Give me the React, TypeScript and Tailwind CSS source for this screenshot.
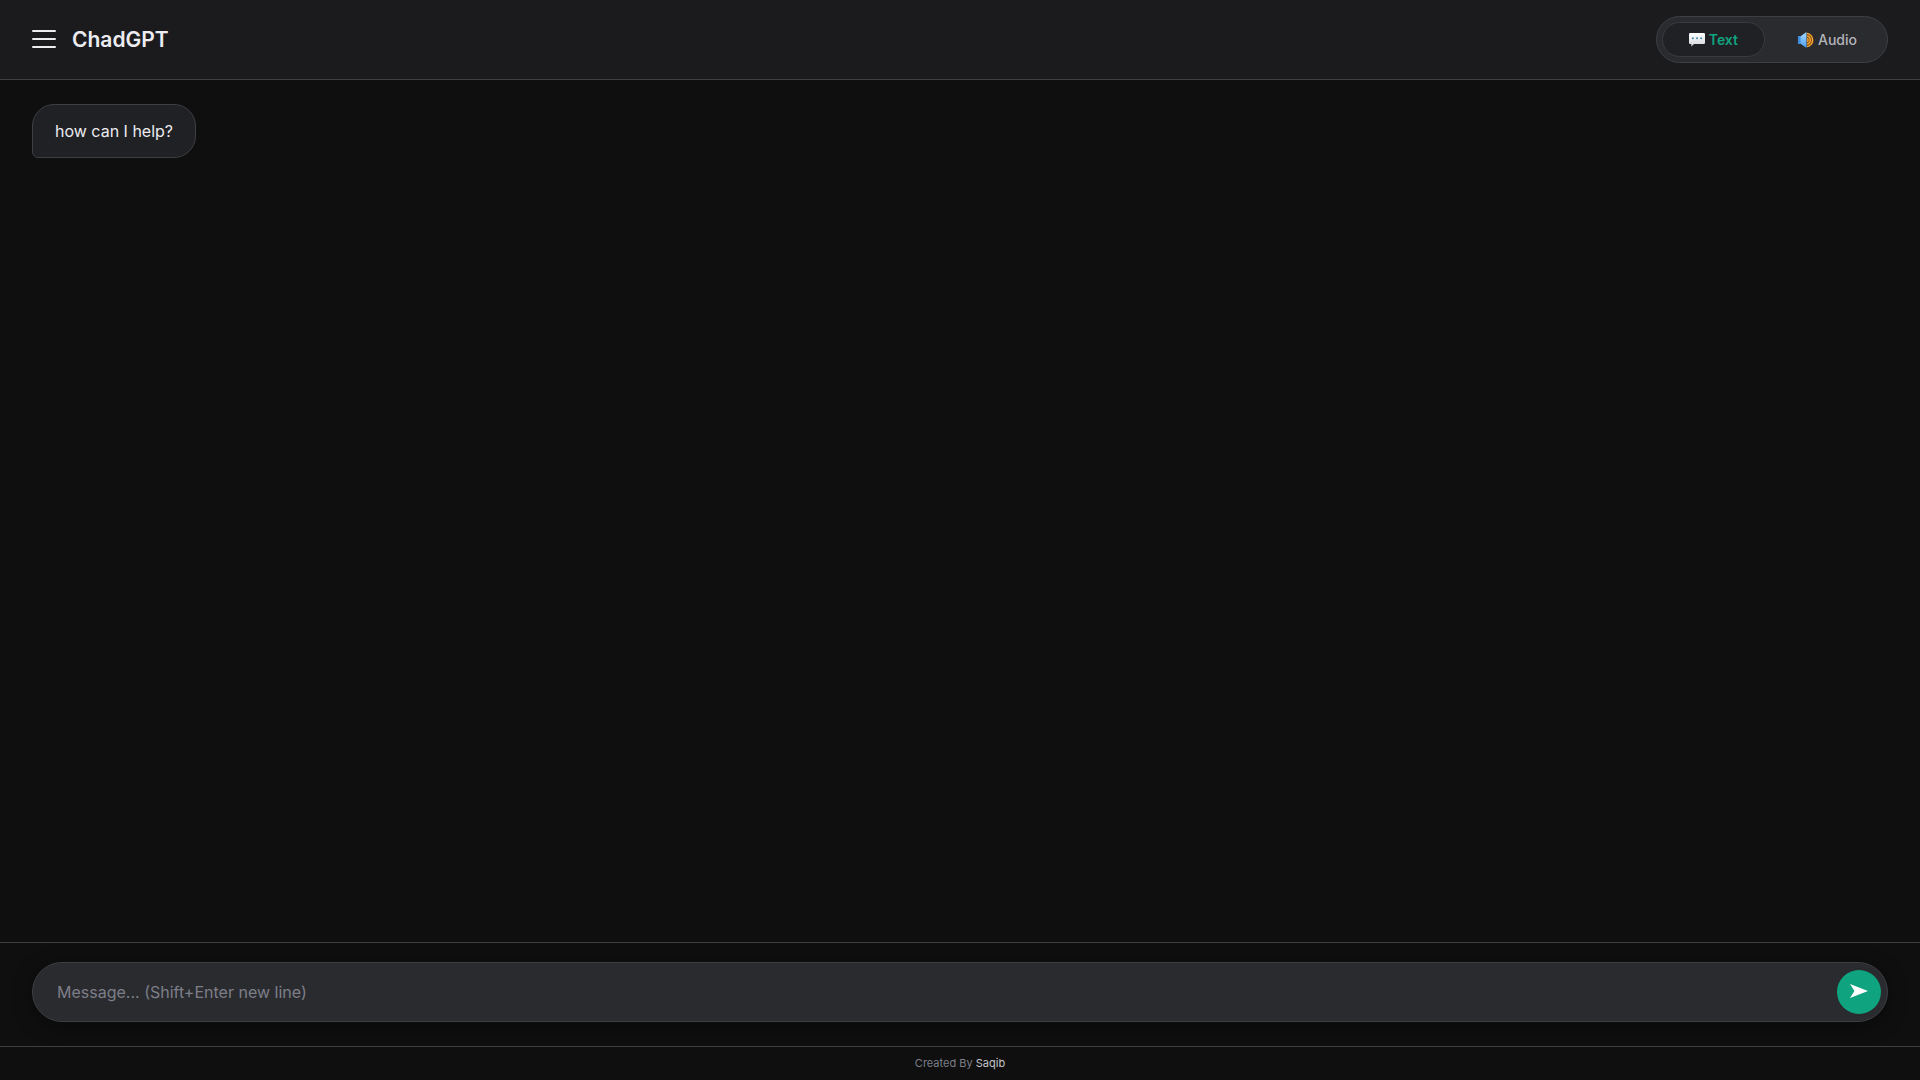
import { useState } from 'react';
import type { FormEvent } from 'react';

type Mode = 'text' | 'audio';

interface Message {
  id: number;
  text: string;
}

const messages: Message[] = [{ id: 1, text: 'how can I help?' }];

const SpeechIcon = () => (
  <svg width="16" height="14" viewBox="0 0 16 14" aria-hidden="true">
    <defs>
      <linearGradient id="speech" x1="0" y1="0" x2="0" y2="1">
        <stop offset="0" stopColor="#ffffff" />
        <stop offset="1" stopColor="#d3d7db" />
      </linearGradient>
    </defs>
    <path
      d="M1.2 0h13.6a1.2 1.2 0 0 1 1.2 1.2v8.6a1.2 1.2 0 0 1-1.2 1.2H5L2.2 13.6 2.4 11H1.2A1.2 1.2 0 0 1 0 9.800v-8.600A1.2 1.2 0 0 1 1.2 0z"
      fill="url(#speech)"
    />
    <g fill="#3f8ba8">
      <circle cx="3.9" cy="5.300" r="1" />
      <circle cx="8" cy="5.300" r="1" />
      <circle cx="12.1" cy="5.300" r="1" />
    </g>
  </svg>
);

const SpeakerIcon = () => (
  <svg width="16" height="16" viewBox="0 0 16 16" aria-hidden="true">
    <defs>
      <linearGradient id="speaker" x1="0" y1="0" x2="0" y2="1">
        <stop offset="0" stopColor="#a9d9ff" />
        <stop offset="1" stopColor="#4a9df0" />
      </linearGradient>
    </defs>
    <path d="M0 4.200h2.600L8.500 0v16L2.600 11.800H0z" fill="url(#speaker)" />
    <path d="M0 4.200h2.600v7.600H0z" fill="#3c8fe0" />
    <path d="M9 1.200a6.800 6.800 0 0 1 0 13.600z" fill="#7a4d16" />
    <g fill="none" stroke="#f5a32f" strokeWidth="1.400">
      <path d="M9 6.400a1.700 1.700 0 0 1 0 3.200" />
      <path d="M9 3.900a4.200 4.200 0 0 1 0 8.200" />
      <path d="M9 1.400a6.700 6.700 0 0 1 0 13.200" />
    </g>
  </svg>
);

const App = () => {
  const [mode, setMode] = useState<Mode>('text');
  const [draft, setDraft] = useState('');

  const tabClass = (active: boolean) =>
    `flex h-[35px] items-center gap-1 rounded-full border text-sm ${
      active
        ? 'border-[#3a3b40] bg-[#202125] px-[26px] font-semibold text-[#10a37f]'
        : 'border-transparent px-6 font-medium text-[#b4b4bb]'
    }`;

  const handleSubmit = (e: FormEvent) => {
    e.preventDefault();
    setDraft('');
  };

  return (
    <div className="flex h-screen flex-col bg-[#0f0f0f] font-['Inter',sans-serif] text-[#ececf1]">
      <header className="flex h-20 shrink-0 items-center justify-between border-b border-[#3e3f44] bg-[#1b1b1e] px-8">
        <div className="flex items-center gap-4">
          <button type="button" aria-label="Open menu" className="flex w-6 flex-col gap-[6px] pb-[2px]">
            <span className="h-[2px] w-full rounded-full bg-[#ececf1]" />
            <span className="h-[2px] w-full rounded-full bg-[#ececf1]" />
            <span className="h-[2px] w-full rounded-full bg-[#ececf1]" />
          </button>
          <h1 className="text-[21px] font-semibold">ChadGPT</h1>
        </div>

        <div className="flex gap-2 rounded-full border border-[#3e3f44] bg-[#2a2b2f] p-[5px]">
          <button
            type="button"
            aria-pressed={mode === 'text'}
            onClick={() => setMode('text')}
            className={tabClass(mode === 'text')}
          >
            <SpeechIcon />
            Text
          </button>
          <button
            type="button"
            aria-pressed={mode === 'audio'}
            onClick={() => setMode('audio')}
            className={tabClass(mode === 'audio')}
          >
            <SpeakerIcon />
            Audio
          </button>
        </div>
      </header>

      <main className="flex flex-1 flex-col items-start gap-4 overflow-y-auto px-8 py-6">
        {messages.map((message) => (
          <p
            key={message.id}
            className="rounded-[22px] rounded-bl-[6px] border border-[#3e3f44] bg-[#202125] px-[22px] py-[14px] text-base"
          >
            {message.text}
          </p>
        ))}
      </main>

      <form onSubmit={handleSubmit} className="border-t border-[#3e3f44] px-8 pt-[19px] pb-6">
        <div className="flex items-center rounded-full border border-[#3e3f44] bg-[#2a2b2f] py-[7px] pr-[6px] pl-6 shadow-[0_4px_20px_rgba(0,0,0,0.4)]">
          <textarea
            rows={1}
            aria-label="Message"
            value={draft}
            onChange={(e) => setDraft(e.target.value)}
            placeholder="Message... (Shift+Enter new line)"
            className="h-6 flex-1 resize-none bg-transparent text-base outline-none placeholder:text-[#7d7e88]"
          />
          <button
            type="submit"
            aria-label="Send"
            className="flex size-11 items-center justify-center rounded-full bg-[#10a37f] text-white"
          >
            <svg width="18" height="16" viewBox="0 0 18 16" fill="currentColor" aria-hidden="true">
              <path d="M0 0 18 7 0 14 4.4 7z" />
            </svg>
          </button>
        </div>
      </form>

      <footer className="border-t border-[#3e3f44] py-2 text-center text-[11px] leading-[17px] text-[#7d7e88]">
        Created By <span className="text-[#c5c5cc]">Saqib</span>
      </footer>
    </div>
  );
};

export default App;
